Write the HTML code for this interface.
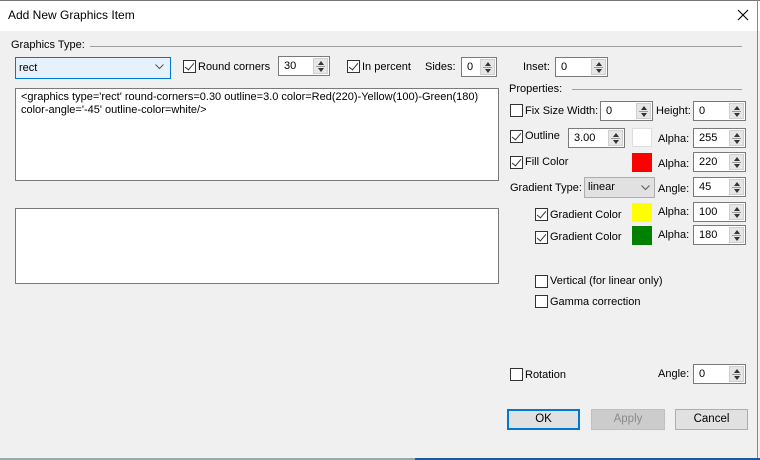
<!DOCTYPE html>
<html><head><meta charset="utf-8"><style>
*{box-sizing:border-box;margin:0;padding:0}
body{width:760px;height:460px;background:#f0f0f0;font-family:"Liberation Sans",sans-serif;font-size:11px;color:#000;position:relative;overflow:hidden}
.a{position:absolute;white-space:nowrap}
.t{position:absolute;white-space:nowrap;line-height:14px}
.cb{position:absolute;width:13px;height:13px;border:1px solid #333;background:#fff}
.cb.c::after{content:"";position:absolute;left:3px;top:0px;width:4px;height:8px;border:solid #333;border-width:0 1.3px 1.3px 0;transform:rotate(40deg)}
.sp{position:absolute;border:1px solid #7a7a7a;background:#fff;height:20px}
.sp span{position:absolute;left:5px;top:3px}
.sp i{position:absolute;right:1px;top:1px;width:15px;height:16px;background:#e6e6e6;border:1px solid #cfcfcf}
.sp i::before{content:"";position:absolute;left:4px;top:2px;border:3px solid transparent;border-bottom:4px solid #333;border-top:0}
.sp i::after{content:"";position:absolute;left:4px;top:9px;border:3px solid transparent;border-top:4px solid #333;border-bottom:0}
.sp i b{position:absolute;left:2px;right:2px;top:7px;height:1px;background:#999}
.sw{position:absolute;width:20px;height:19px}
.btn{position:absolute;top:409px;height:21px;border:1px solid #adadad;background:#e1e1e1;text-align:center;line-height:19px;font-size:11.5px}
.line{position:absolute;height:1px;background:#a0a0a0}
</style></head><body>
<div class="a" style="left:0;top:0;width:760px;height:31px;background:#fff"></div>
<div class="a" style="left:0;top:0;width:760px;height:1px;background:#777"></div>
<div class="a" style="left:757px;top:0;width:1px;height:460px;background:#888"></div>
<div class="t" style="left:8px;top:8px;font-size:12px">Add New Graphics Item</div>
<svg class="a" style="left:737px;top:9px" width="12" height="12"><path d="M1 1L11 11M11 1L1 11" stroke="#000" stroke-width="1.1"/></svg>

<div class="t" style="left:11px;top:38px">Graphics Type:</div>
<div class="line" style="left:90px;top:46px;width:652px"></div>
<div class="a" style="left:15px;top:57px;width:156px;height:22px;background:#e5f1fb;border:1px solid #0078d7"></div>
<div class="t" style="left:19px;top:61px">rect</div>
<svg class="a" style="left:155px;top:64px" width="9" height="6"><path d="M0.5 0.5L4.5 4.5L8.5 0.5" stroke="#555" fill="none"/></svg>
<div class="cb c" style="left:183px;top:60px"></div><div class="t" style="left:198px;top:60px">Round corners</div>
<div class="sp" style="left:278px;top:56px;width:52px"><span>30</span><i><b></b></i></div>
<div class="cb c" style="left:347px;top:60px"></div><div class="t" style="left:362px;top:60px">In percent</div>
<div class="t" style="left:425px;top:60px">Sides:</div>
<div class="sp" style="left:461px;top:57px;width:36px"><span>0</span><i><b></b></i></div>
<div class="t" style="left:523px;top:60px">Inset:</div>
<div class="sp" style="left:555px;top:57px;width:53px"><span>0</span><i><b></b></i></div>

<div class="t" style="left:509px;top:82px">Properties:</div>
<div class="line" style="left:572px;top:89px;width:170px"></div>

<div class="a" style="left:15px;top:88px;width:484px;height:93px;background:#fff;border:1px solid #7a7a7a"></div>
<div class="t" style="left:21px;top:91px;line-height:13px">&lt;graphics type='rect' round-corners=0.30 outline=3.0 color=Red(220)-Yellow(100)-Green(180)<br>color-angle='-45' outline-color=white/&gt;</div>
<div class="a" style="left:15px;top:208px;width:484px;height:76px;background:#fff;border:1px solid #7a7a7a"></div>

<div class="cb" style="left:510px;top:104px"></div><div class="t" style="left:525px;top:104px">Fix Size</div>
<div class="t" style="left:567px;top:104px">Width:</div>
<div class="sp" style="left:600px;top:101px;width:53px"><span>0</span><i><b></b></i></div>
<div class="t" style="left:656px;top:104px">Height:</div>
<div class="sp" style="left:693px;top:101px;width:53px"><span>0</span><i><b></b></i></div>

<div class="cb c" style="left:510px;top:130px"></div><div class="t" style="left:525px;top:129px">Outline</div>
<div class="sp" style="left:568px;top:128px;width:57px"><span>3.00</span><i><b></b></i></div>
<div class="sw" style="left:632px;top:128px;background:#fff;border:1px solid #ddd"></div>
<div class="t" style="left:658px;top:132px">Alpha:</div>
<div class="sp" style="left:693px;top:128px;width:53px"><span>255</span><i><b></b></i></div>

<div class="cb c" style="left:510px;top:156px"></div><div class="t" style="left:525px;top:155px">Fill Color</div>
<div class="sw" style="left:632px;top:153px;background:#f00"></div>
<div class="t" style="left:658px;top:157px">Alpha:</div>
<div class="sp" style="left:693px;top:152px;width:53px"><span>220</span><i><b></b></i></div>

<div class="t" style="left:510px;top:181px">Gradient Type:</div>
<div class="a" style="left:584px;top:177px;width:71px;height:21px;background:#e1e1e1;border:1px solid #adadad"></div>
<div class="t" style="left:588px;top:180px">linear</div>
<svg class="a" style="left:641px;top:185px" width="9" height="6"><path d="M0.5 0.5L4.5 4.5L8.5 0.5" stroke="#555" fill="none"/></svg>
<div class="t" style="left:658px;top:182px">Angle:</div>
<div class="sp" style="left:693px;top:177px;width:53px"><span>45</span><i><b></b></i></div>

<div class="cb c" style="left:535px;top:208px"></div><div class="t" style="left:550px;top:208px">Gradient Color</div>
<div class="sw" style="left:632px;top:203px;background:#ff0"></div>
<div class="t" style="left:658px;top:205px">Alpha:</div>
<div class="sp" style="left:693px;top:202px;width:53px"><span>100</span><i><b></b></i></div>

<div class="cb c" style="left:535px;top:231px"></div><div class="t" style="left:550px;top:230px">Gradient Color</div>
<div class="sw" style="left:632px;top:226px;background:#008000"></div>
<div class="t" style="left:658px;top:228px">Alpha:</div>
<div class="sp" style="left:693px;top:225px;width:53px"><span>180</span><i><b></b></i></div>

<div class="cb" style="left:535px;top:275px"></div><div class="t" style="left:550px;top:274px">Vertical (for linear only)</div>
<div class="cb" style="left:535px;top:295px"></div><div class="t" style="left:550px;top:295px">Gamma correction</div>

<div class="cb" style="left:510px;top:368px"></div><div class="t" style="left:525px;top:368px">Rotation</div>
<div class="t" style="left:658px;top:367px">Angle:</div>
<div class="sp" style="left:693px;top:364px;width:53px"><span>0</span><i><b></b></i></div>

<div class="btn" style="left:507px;width:73px;border:2px solid #0078d7;line-height:17px">OK</div>
<div class="btn" style="left:591px;width:74px;background:#cccccc;border-color:#bfbfbf;color:#8a8a8a">Apply</div>
<div class="btn" style="left:675px;width:73px">Cancel</div>
<div class="a" style="left:0;top:458px;width:760px;height:2px;background:#9aa"></div>
<div class="a" style="left:415px;top:458px;width:345px;height:2px;background:#1e5a9a"></div>
</body></html>
